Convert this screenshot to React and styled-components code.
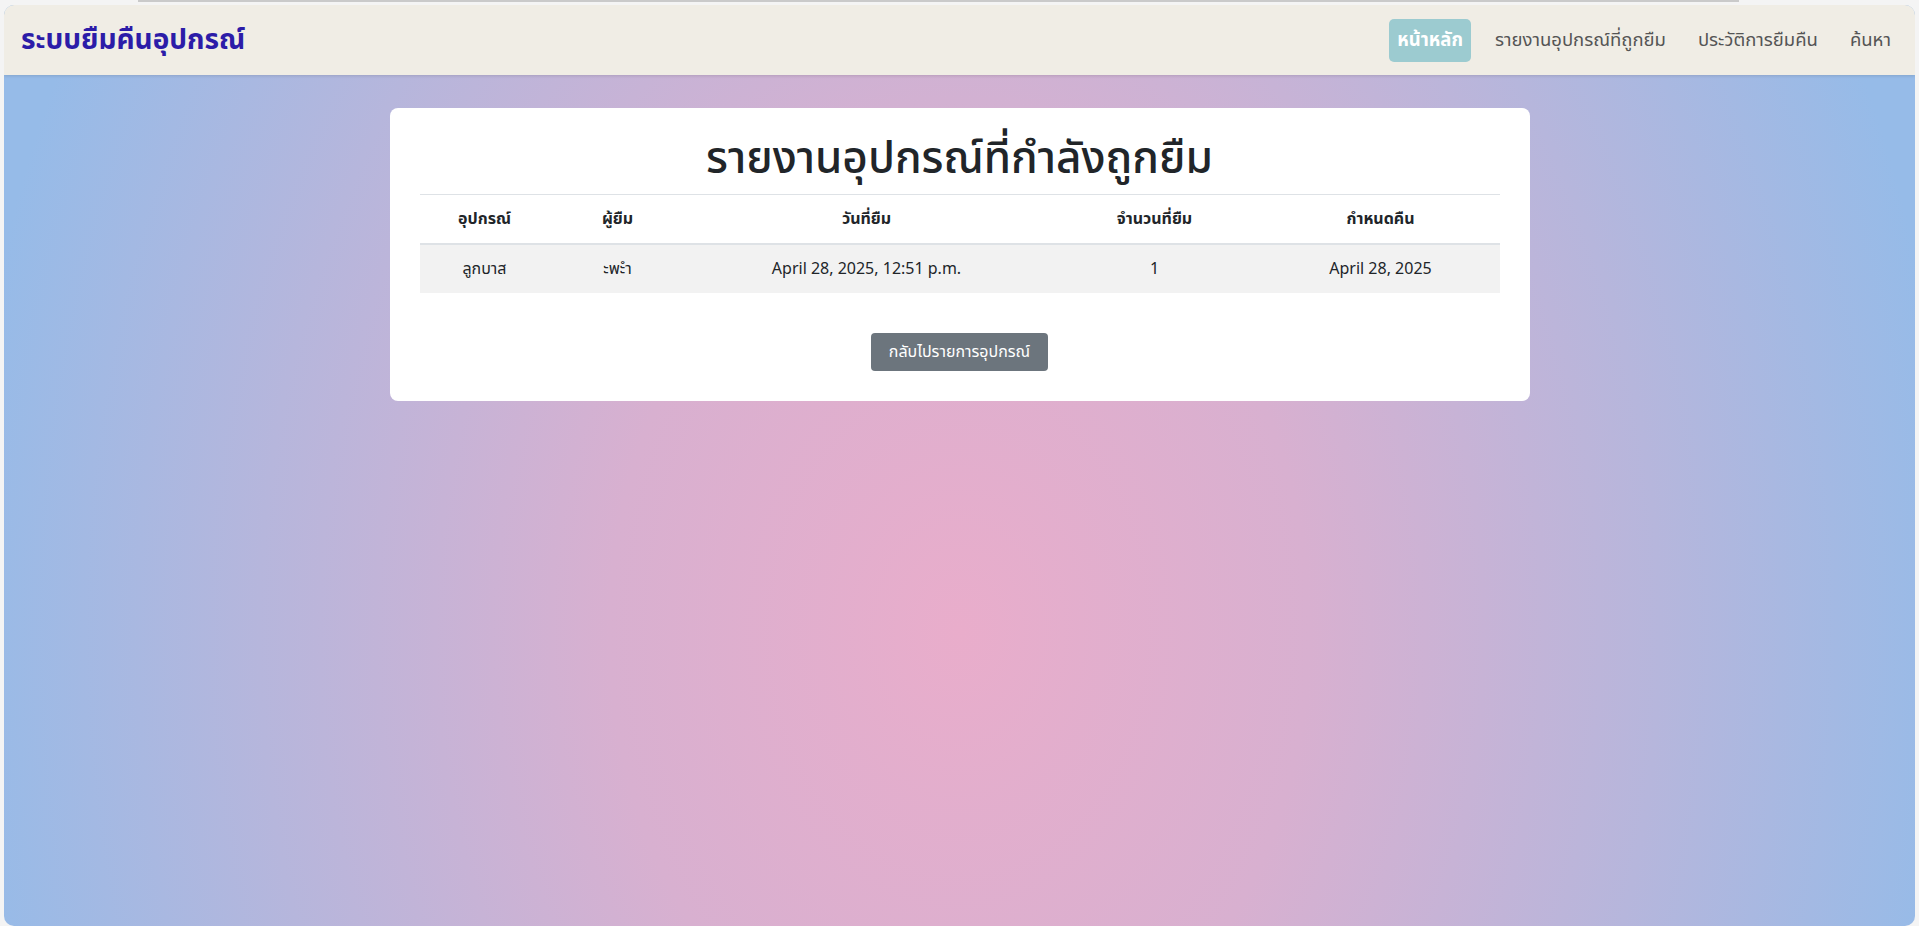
import React from "react";
import styled, { createGlobalStyle } from "styled-components";

const GlobalStyle = createGlobalStyle`
  * { box-sizing: border-box; }
  html, body { margin: 0; padding: 0; }
  body {
    background: #f4f4f4;
    font-family: "Noto Sans Thai", "Noto Sans", "Liberation Sans", sans-serif;
    color: #212529;
  }
`;

const Frame = styled.div`
  display: flex;
  flex-direction: column;
  height: 100vh;
  padding: 0 4px;
`;

const TopStrip = styled.div`
  height: 5px;
  flex-shrink: 0;
`;

const TopLine = styled.div`
  margin-left: 134px;
  width: 1601px;
  height: 2px;
  background: #cacaca;
`;

const Window = styled.div`
  flex: 1;
  display: flex;
  flex-direction: column;
  border-radius: 10px;
  overflow: hidden;
  background: radial-gradient(
    ellipse 1000px 1300px at 50% 68%,
    #e9adcb 0%,
    #d8b0d0 35%,
    #b6b6dc 70%,
    #96bbe8 100%
  );
`;

const Navbar = styled.nav`
  height: 70px;
  flex-shrink: 0;
  display: flex;
  align-items: center;
  justify-content: space-between;
  padding: 0 16px 0 17px;
  background: #f0ede5;
  box-shadow: 0 1px 3px rgba(0, 0, 0, 0.12);
`;

const Brand = styled.a`
  font-size: 28px;
  font-weight: 700;
  color: #2c1ca8;
  text-decoration: none;
`;

const NavList = styled.div`
  display: flex;
  align-items: center;
  gap: 16px;
`;

const NavLink = styled.a`
  font-size: 18.5px;
  line-height: 27px;
  padding: 8px 8px;
  border-radius: 5px;
  text-decoration: none;
  color: ${(p) => (p.$active ? "#ffffff" : "#555555")};
  font-weight: ${(p) => (p.$active ? 700 : 400)};
  background: ${(p) => (p.$active ? "#9ccbd0" : "transparent")};
`;

const Main = styled.main`
  display: flex;
  justify-content: center;
  padding-top: 33px;
`;

const Card = styled.section`
  width: 1140px;
  background: #ffffff;
  border-radius: 8px;
  padding: 26px 30px 30px;
  display: flex;
  flex-direction: column;
  align-items: center;
`;

const Title = styled.h1`
  margin: 0 0 8px;
  font-size: 44px;
  line-height: 52px;
  font-weight: 500;
  color: #212529;
`;

const Table = styled.table`
  width: 100%;
  border-collapse: collapse;
  table-layout: fixed;
  border-top: 1px solid #dee2e6;
`;

const Th = styled.th`
  height: 49px;
  padding: 0;
  font-size: 16px;
  font-weight: 700;
  text-align: center;
  border-bottom: 2px solid #dee2e6;
`;

const Row = styled.tr`
  background: #f2f2f2;
`;

const Td = styled.td`
  height: 49px;
  padding: 0;
  font-size: 16px;
  text-align: center;
  white-space: nowrap;
`;

const BackButton = styled.button`
  margin-top: 40px;
  width: 177px;
  height: 38px;
  padding: 0;
  border: none;
  border-radius: 4px;
  background: #6c757d;
  color: #ffffff;
  font-family: inherit;
  font-size: 16px;
`;

const columns = [
  { label: "อุปกรณ์", width: 130 },
  { label: "ผู้ยืม", width: 136 },
  { label: "วันที่ยืม", width: 362 },
  { label: "จำนวนที่ยืม", width: 214 },
  { label: "กำหนดคืน", width: 238 },
];

const rows = [
  ["ลูกบาส", "ะพะำ", "April 28, 2025, 12:51 p.m.", "1", "April 28, 2025"],
];

const App = () => {
  return (
    <>
      <GlobalStyle />
      <Frame>
        <TopStrip>
          <TopLine />
        </TopStrip>
        <Window>
          <Navbar>
            <Brand href="#">ระบบยืมคืนอุปกรณ์</Brand>
            <NavList>
              <NavLink href="#" $active>
                หน้าหลัก
              </NavLink>
              <NavLink href="#">รายงานอุปกรณ์ที่ถูกยืม</NavLink>
              <NavLink href="#">ประวัติการยืมคืน</NavLink>
              <NavLink href="#">ค้นหา</NavLink>
            </NavList>
          </Navbar>
          <Main>
            <Card>
              <Title>รายงานอุปกรณ์ที่กำลังถูกยืม</Title>
              <Table>
                <colgroup>
                  {columns.map((c) => (
                    <col key={c.label} style={{ width: c.width }} />
                  ))}
                </colgroup>
                <thead>
                  <tr>
                    {columns.map((c) => (
                      <Th key={c.label}>{c.label}</Th>
                    ))}
                  </tr>
                </thead>
                <tbody>
                  {rows.map((r, ri) => (
                    <Row key={ri}>
                      {r.map((cell, i) => (
                        <Td key={i}>{cell}</Td>
                      ))}
                    </Row>
                  ))}
                </tbody>
              </Table>
              <BackButton>กลับไปรายการอุปกรณ์</BackButton>
            </Card>
          </Main>
        </Window>
      </Frame>
    </>
  );
};

export default App;
